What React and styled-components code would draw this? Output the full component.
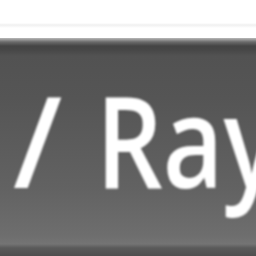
import styled, { createGlobalStyle } from "styled-components";

const Global = createGlobalStyle`
  html, body { margin: 0; padding: 0; background: #fff; overflow: hidden; }
`;

const Page = styled.div`
  width: 256px;
  height: 256px;
  display: flex;
  flex-direction: column;
  overflow: hidden;
`;

const TopStrip = styled.div`
  height: 38px;
  flex: none;
  background: linear-gradient(
    to bottom,
    #ffffff 0px,
    #ffffff 23px,
    #f0f0f0 25px,
    #ffffff 28px,
    #ffffff 38px
  );
`;

const Bar = styled.div`
  flex: 1;
  display: flex;
  align-items: flex-start;
  padding: 38px 0 0 13px;
  background: linear-gradient(
    to bottom,
    #b8b8b8 0px,
    #6a6a6a 4px,
    #444444 8px,
    #474747 12px,
    #525252 18px,
    #555555 60px,
    #626262 150px,
    #6e6e6e 198px,
    #747474 206px,
    #5a5a5a 210px,
    #4e4e4e 218px
  );
  font-family: "Open Sans", "DejaVu Sans", sans-serif;
  font-size: 126px;
  font-weight: 600;
  line-height: 1;
  color: #ffffff;
  white-space: nowrap;
`;

const Crumb = styled.span`
  display: inline-block;
  margin-right: ${(p) => p.gap || 0}px;
  transform: scaleX(${(p) => p.squeeze || 1});
  transform-origin: left center;
  filter: blur(1px);
`;

export default function App() {
  return (
    <Page>
      <Global />
      <TopStrip />
      <Bar>
        <Crumb gap={34}>/</Crumb>
        <Crumb squeeze={0.83}>Ray</Crumb>
      </Bar>
    </Page>
  );
}
